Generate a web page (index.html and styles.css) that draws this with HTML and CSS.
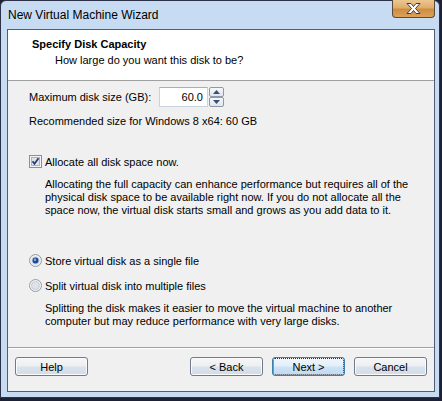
FILE: index.html
```html
<!DOCTYPE html>
<html>
<head>
<meta charset="utf-8">
<link rel="stylesheet" href="styles.css">
</head>
<body>
<div class="window">
  <div class="titlebar">
    <span class="title">New Virtual Machine Wizard</span>
    <div class="close">
      <svg width="17" height="11" viewBox="0 0 17 11"><path d="M2 0.5h4l2.5 3 2.5-3h4l-4.5 5 4.5 5h-4l-2.5-3-2.5 3h-4l4.5-5z" fill="#fff" stroke="#3d3a4a" stroke-width="1"/></svg>
    </div>
  </div>
  <div class="panel">
    <div class="header">
      <div class="h-title">Specify Disk Capacity</div>
      <div class="h-sub">How large do you want this disk to be?</div>
    </div>
    <div class="content">
      <div class="row size-row">
        <span class="size-label">Maximum disk size (GB):</span>
        <div class="spinner">
          <div class="spin-input">60.0</div>
          <div class="spin-btns">
            <div class="spin-btn"><svg width="7" height="4" viewBox="0 0 7 4"><path d="M0 4L3.5 0 7 4z" fill="#3b4e74"/></svg></div>
            <div class="spin-btn"><svg width="7" height="4" viewBox="0 0 7 4"><path d="M0 0L3.5 4 7 0z" fill="#3b4e74"/></svg></div>
          </div>
        </div>
      </div>
      <div class="line rec">Recommended size for Windows 8 x64: 60 GB</div>
      <div class="row check-row">
        <svg class="box" width="13" height="13" viewBox="0 0 13 13">
          <rect x="0.5" y="0.5" width="12" height="12" fill="#f4f4f4" stroke="#8e8f8f"/>
          <rect x="2.5" y="2.5" width="8" height="8" fill="#dfe4ea" stroke="#aeb3b9"/>
          <path d="M3.5 6.2l2 2.5 4-5.5" fill="none" stroke="#2a3f78" stroke-width="1.8"/>
        </svg>
        <span>Allocate all disk space now.</span>
      </div>
      <p class="desc d1">Allocating the full capacity can enhance performance but requires all of the physical disk space to be available right now. If you do not allocate all the space now, the virtual disk starts small and grows as you add data to it.</p>
      <div class="row radio-row r1">
        <svg class="radio" width="13" height="13" viewBox="0 0 13 13">
          <circle cx="6.5" cy="6.5" r="6" fill="#eef0f2" stroke="#8e9aa8"/>
          <circle cx="6.5" cy="6.5" r="4" fill="#cfd6de"/>
          <circle cx="6.5" cy="6.5" r="3" fill="#1e4a9a"/>
          <circle cx="6" cy="5.8" r="1.2" fill="#8fb1e6"/>
        </svg>
        <span>Store virtual disk as a single file</span>
      </div>
      <div class="row radio-row r2">
        <svg class="radio" width="13" height="13" viewBox="0 0 13 13">
          <circle cx="6.5" cy="6.5" r="6" fill="#f2f2f2" stroke="#959ca4"/>
          <circle cx="6.5" cy="6.5" r="4" fill="#e0e3e6" stroke="#c8cdd2"/>
        </svg>
        <span>Split virtual disk into multiple files</span>
      </div>
      <p class="desc d2">Splitting the disk makes it easier to move the virtual machine to another computer but may reduce performance with very large disks.</p>
    </div>
    <div class="footer">
      <button class="btn">Help</button>
      <div class="spacer"></div>
      <button class="btn">&lt; Back</button>
      <button class="btn default">Next &gt;</button>
      <button class="btn">Cancel</button>
    </div>
  </div>
</div>
</body>
</html>
```
FILE: styles.css
```css
html, body {
  margin: 0;
  padding: 0;
}
body {
  width: 442px;
  height: 401px;
  background: #1d2136;
  font-family: "Liberation Sans", Arial, sans-serif;
  font-size: 11px;
  color: #000;
  overflow: hidden;
}
.window {
  width: 440px;
  height: 398px;
  box-sizing: border-box;
  border: 1px solid #2b3247;
  border-radius: 6px 6px 0 0;
  background: #c7dcf2;
  display: flex;
  flex-direction: column;
}
.titlebar {
  height: 28px;
  display: flex;
  align-items: flex-start;
  padding-left: 7px;
}
.title {
  font-size: 12px;
  margin-top: 7px;
  color: #000;
}
.close {
  margin-left: auto;
  margin-right: 4px;
  width: 43px;
  height: 18px;
  margin-top: -1px;
  box-sizing: border-box;
  border: 1px solid #5a4a3a;
  border-top: none;
  border-radius: 0 0 4px 4px;
  background: linear-gradient(#ecc793 0%, #e0ad6a 45%, #cc8d42 55%, #dba257 100%);
  display: flex;
  align-items: center;
  justify-content: center;
}
.panel {
  margin-left: 6px;
  width: 428px;
  height: 363px;
  box-sizing: border-box;
  border: 1px solid #4f5d78;
  background: #f0f0f0;
  display: flex;
  flex-direction: column;
}
.header {
  height: 51px;
  box-sizing: border-box;
  background: #fff;
  border-bottom: 1px solid #a0a0a0;
  padding-left: 24px;
  padding-top: 8px;
}
.h-title {
  font-weight: bold;
  line-height: 13px;
  height: 13px;
}
.h-sub {
  line-height: 13px;
  margin-top: 3px;
  padding-left: 23px;
}
.content {
  flex: 1;
  padding-left: 21px;
}
.row {
  display: flex;
  align-items: center;
}
.size-row {
  margin-top: 6px;
  height: 20px;
}
.size-label {
  width: 130px;
}
.spinner {
  display: flex;
  height: 20px;
}
.spin-input {
  width: 49px;
  height: 20px;
  box-sizing: border-box;
  background: #fff;
  border: 1px solid #c9d3de;
  border-top-color: #abadb3;
  text-align: right;
  padding-right: 4px;
  line-height: 18px;
}
.spin-btns {
  display: flex;
  flex-direction: column;
  margin-left: 1px;
}
.spin-btn {
  width: 15px;
  height: 10px;
  box-sizing: border-box;
  border: 1px solid #8d98a8;
  border-radius: 2px;
  background: linear-gradient(#f6f8fa, #dfe6ee);
  display: flex;
  align-items: center;
  justify-content: center;
}
.line {
  line-height: 13px;
}
.rec {
  margin-top: 8px;
}
.check-row {
  margin-top: 27px;
  height: 13px;
  gap: 3px;
}
.box, .radio {
  flex: none;
}
.desc {
  margin: 10px 0 0 16px;
  line-height: 13px;
  width: 370px;
}
.r1 {
  margin-top: 37px;
  height: 13px;
  gap: 3px;
}
.r2 {
  margin-top: 12px;
  height: 13px;
  gap: 3px;
}
.d2 {
  margin-top: 10px;
}
.footer {
  height: 34px;
  border-top: 1px solid #a0a0a0;
  box-shadow: inset 0 1px 0 #fff;
  display: flex;
  align-items: flex-start;
  padding: 9px 0 0 7px;
  gap: 9px;
}
.spacer {
  flex: 1;
}
.btn {
  width: 73px;
  height: 19px;
  margin: 0;
  padding: 0;
  font-family: inherit;
  font-size: 11px;
  color: #000;
  border: 1px solid #707a8c;
  border-radius: 3px;
  background: linear-gradient(#f5f6f7 0%, #eceef0 48%, #d9e3ec 52%, #d2dde8 100%);
  box-shadow: inset 0 0 0 1px #fbfbfb;
}
.btn:last-child {
  margin-right: 7px;
}
.default {
  border-color: #3c7fb1;
  background: linear-gradient(#eef6fc 0%, #e2eff9 48%, #cde3f5 52%, #bfdaf1 100%);
  outline: 1px dotted #1c2c48;
  outline-offset: -2px;
}
```
